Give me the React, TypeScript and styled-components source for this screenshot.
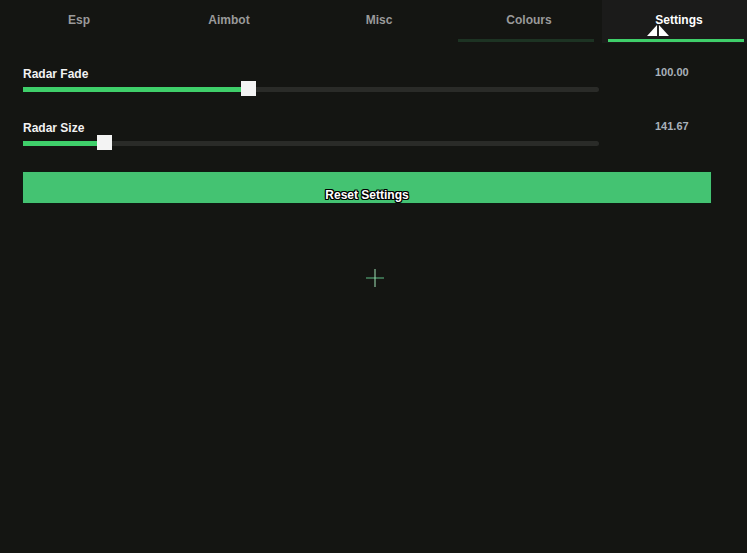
import styled, { createGlobalStyle } from "styled-components";

const GlobalStyle = createGlobalStyle`
  html, body {
    margin: 0;
    padding: 0;
    background: #141512;
  }
  body {
    font-family: "Liberation Sans", Arial, sans-serif;
  }
`;

const Page = styled.div`
  position: relative;
  width: 747px;
  height: 553px;
  background: #141512;
  overflow: hidden;
`;

const TabBar = styled.div`
  display: grid;
  grid-template-columns: repeat(5, 150px);
  padding-left: 4px;
  height: 43px;
`;

const Tab = styled.div<{ $active?: boolean; $hover?: boolean }>`
  position: relative;
  display: flex;
  justify-content: center;
  padding-top: 13px;
  box-sizing: border-box;
  font-size: 12px;
  font-weight: bold;
  color: ${(p) => (p.$active ? "#ffffff" : "#9a9a9a")};
  background: ${(p) => (p.$active ? "#1b1b1a" : "transparent")};
  box-shadow: ${(p) => (p.$active ? "-2px 0 0 #1b1b1a" : "none")};

  &::after {
    content: "";
    position: absolute;
    left: 4px;
    right: 10px;
    top: 39px;
    height: 3px;
    background: ${(p) =>
      p.$active ? "#3fcf6a" : p.$hover ? "#1d3323" : "transparent"};
  }
`;

const Content = styled.div`
  padding: 25px 0 0 23px;
  display: flex;
  flex-direction: column;
`;

const Row = styled.div`
  display: grid;
  grid-template-columns: 576px 1fr;
  margin-bottom: 20px;

  & + & {
    margin-top: 5px;
  }
`;

const Label = styled.div`
  font-size: 12px;
  font-weight: bold;
  line-height: 13px;
  color: #f2f2f2;
`;

const Value = styled.div`
  font-size: 11px;
  font-weight: bold;
  line-height: 12px;
  color: #a9b1ba;
  padding-left: 56px;
  margin-top: -2px;
`;

const Slider = styled.div`
  position: relative;
  height: 16px;
  display: flex;
  align-items: center;
`;

const Track = styled.div`
  position: relative;
  width: 100%;
  height: 5px;
  background: #2a2b28;
  border-radius: 0 3px 3px 0;
`;

const Fill = styled.div`
  position: absolute;
  left: 0;
  top: 0;
  bottom: 0;
  background: #3fcf6a;
`;

const Thumb = styled.div`
  position: absolute;
  top: 0;
  width: 15px;
  height: 15px;
  background: #f3f3f3;
`;

const ResetButton = styled.button`
  display: flex;
  justify-content: center;
  align-items: flex-end;
  margin: 0 0 0 -1px;
  width: 690px;
  height: 33px;
  background: #44c372;
  border: 1px solid #0e1a12;
  padding: 0;
  font-family: "Liberation Sans", Arial, sans-serif;
  font-size: 12px;
  font-weight: bold;
  color: #ffffff;
  text-shadow: 1px 0 0 #000, -1px 0 0 #000, 0 1px 0 #000, 0 -1px 0 #000,
    1px 1px 0 #000, -1px -1px 0 #000, 1px -1px 0 #000, -1px 1px 0 #000;
  box-sizing: border-box;
  line-height: 15px;
`;

const Crosshair = styled.svg`
  position: absolute;
  left: 365px;
  top: 268px;
`;

const Cursor = styled.svg`
  position: absolute;
  left: 646px;
  top: 24px;
`;

const tabs = ["Esp", "Aimbot", "Misc", "Colours", "Settings"];

const sliders = [
  { label: "Radar Fade", value: "100.00", ratio: 0.379 },
  { label: "Radar Size", value: "141.67", ratio: 0.129 },
];

export default function App() {
  return (
    <>
      <GlobalStyle />
      <Page>
        <TabBar>
          {tabs.map((t) => (
            <Tab key={t} $active={t === "Settings"} $hover={t === "Colours"}>
              {t}
            </Tab>
          ))}
        </TabBar>
        <Content>
          {sliders.map((s) => (
            <Row key={s.label}>
              <div>
                <Label>{s.label}</Label>
                <Slider>
                  <Track>
                    <Fill style={{ width: `${s.ratio * 100}%` }} />
                  </Track>
                  <Thumb style={{ left: `${s.ratio * 100}%` }} />
                </Slider>
              </div>
              <Value>{s.value}</Value>
            </Row>
          ))}
          <ResetButton>Reset Settings</ResetButton>
        </Content>
        <Crosshair width="20" height="20" viewBox="0 0 20 20">
          <line x1="1" y1="10" x2="19" y2="10" stroke="#5fbf86" strokeWidth="1" />
          <line x1="10" y1="1" x2="10" y2="19" stroke="#9fe3b5" strokeWidth="1" />
        </Crosshair>
        <Cursor width="24" height="14" viewBox="0 0 24 14">
          <polygon points="11,1 1,12 11,12" fill="#ffffff" />
          <polygon points="13,1 23,12 13,12" fill="#ffffff" />
          <line x1="12" y1="1" x2="12" y2="12" stroke="#2a2a2a" strokeWidth="1.5" />
        </Cursor>
      </Page>
    </>
  );
}
